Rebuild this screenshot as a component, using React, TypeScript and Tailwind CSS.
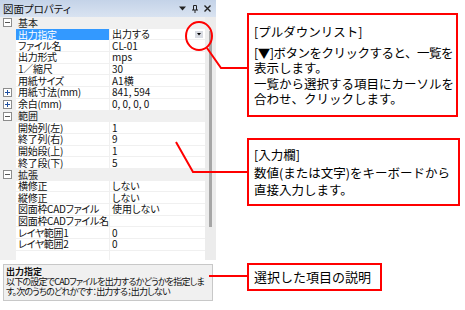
import React from 'react'

type Row =
  | { kind: 'cat'; label: string }
  | { kind: 'prop'; label: string; value?: string; expand?: boolean; selected?: boolean }
  | { kind: 'empty' }

const rows: Row[] = [
  { kind: 'cat', label: '基本' },
  { kind: 'prop', label: '出力指定', value: '出力する', selected: true },
  { kind: 'prop', label: 'ファイル名', value: 'CL-01' },
  { kind: 'prop', label: '出力形式', value: 'mps' },
  { kind: 'prop', label: '1／縮尺', value: '30' },
  { kind: 'prop', label: '用紙サイズ', value: 'A1横' },
  { kind: 'prop', label: '用紙寸法(mm)', value: '841, 594', expand: true },
  { kind: 'prop', label: '余白(mm)', value: '0, 0, 0, 0', expand: true },
  { kind: 'cat', label: '範囲' },
  { kind: 'prop', label: '開始列(左)', value: '1' },
  { kind: 'prop', label: '終了列(右)', value: '9' },
  { kind: 'prop', label: '開始段(上)', value: '1' },
  { kind: 'prop', label: '終了段(下)', value: '5' },
  { kind: 'cat', label: '拡張' },
  { kind: 'prop', label: '横修正', value: 'しない' },
  { kind: 'prop', label: '縦修正', value: 'しない' },
  { kind: 'prop', label: '図面枠CADファイル', value: '使用しない' },
  { kind: 'prop', label: '図面枠CADファイル名', value: '' },
  { kind: 'prop', label: 'レイヤ範囲1', value: '0' },
  { kind: 'prop', label: 'レイヤ範囲2', value: '0' },
  { kind: 'empty' },
]

const font = { fontFamily: '"Noto Sans CJK JP", "Noto Sans", sans-serif' }

// small boxed +/- used by the grid
function Toggle({ open }: { open: boolean }) {
  return (
    <svg width="9" height="9" viewBox="0 0 9 9" className="shrink-0">
      <rect x="0.5" y="0.5" width="8" height="8" fill="#fff" stroke="#8c8c8c" />
      <line x1="2" y1="4.5" x2="7" y2="4.5" stroke={open ? '#555' : '#2050a0'} />
      {!open && <line x1="4.5" y1="2" x2="4.5" y2="7" stroke="#2050a0" />}
    </svg>
  )
}

function GridRow({ row }: { row: Row }) {
  if (row.kind === 'cat') {
    return (
      <div className="flex h-[11.7px] items-center gap-[6px] whitespace-nowrap bg-[#f0f0f0] pl-[3px] text-[10px] leading-[10px] text-[#222]">
        <Toggle open />
        <span>{row.label}</span>
      </div>
    )
  }
  if (row.kind === 'empty') {
    return (
      <div className="flex h-[11.7px]">
        <div className="w-[16px] bg-[#f0f0f0]" />
        <div className="w-[94px] border-r border-[#f0f0f0] bg-white" />
        <div className="flex-1 bg-white" />
      </div>
    )
  }
  return (
    <div className="flex h-[11.7px] whitespace-nowrap text-[10px] leading-[10px]">
      <div className="flex w-[16px] items-center bg-[#f0f0f0] pl-[3px]">
        {row.expand && <Toggle open={false} />}
      </div>
      <div
        className={
          row.selected
            ? 'flex w-[94px] items-center border-r border-[#f0f0f0] bg-[#3399ff] pl-[2px] tracking-[-0.3px] text-white'
            : 'flex w-[94px] items-center border-r border-b border-[#f0f0f0] bg-white pl-[2px] tracking-[-0.3px] text-[#111]'
        }
      >
        {row.label}
      </div>
      <div className="flex flex-1 items-center justify-between border-b border-[#f0f0f0] bg-white pl-[2px] pr-[2px] text-[#111]">
        <span>{row.value}</span>
        {row.selected && (
          <div className="flex h-[7px] w-[8px] items-center justify-center bg-[#d9dce3]">
            <svg width="4" height="3" viewBox="0 0 4 3">
              <path d="M0 0 L4 0 L2 2.5 Z" fill="#000" />
            </svg>
          </div>
        )}
      </div>
    </div>
  )
}

function PropertyPanel() {
  return (
    <div className="flex h-[310px] w-[216px] flex-col bg-white [font-feature-settings:'palt']" style={font}>
      {/* title bar */}
      <div className="flex h-[17px] items-center justify-between bg-gradient-to-b from-[#c4d3e8] to-[#d9e3f1] pl-[3px] pr-[5px] text-[10.5px] text-[#111]">
        <span>図面プロパティ</span>
        <div className="flex items-center gap-[6px]">
          <svg width="7" height="5" viewBox="0 0 7 5">
            <path d="M0 0.5 L7 0.5 L3.5 4.5 Z" fill="#222" />
          </svg>
          <svg width="6" height="8" viewBox="0 0 6 8">
            <path d="M1.5 0.5 V5 M4.5 0.5 V5 M1.5 0.5 H4.5 M0 5 H6 M3 5 V8" stroke="#222" strokeWidth="1" fill="none" />
          </svg>
          <svg width="7" height="7" viewBox="0 0 7 7">
            <path d="M0.5 0.5 L6.5 6.5 M6.5 0.5 L0.5 6.5" stroke="#222" strokeWidth="1.4" />
          </svg>
        </div>
      </div>

      {/* grid + scrollbar */}
      <div className="flex h-[243px] overflow-hidden">
        <div className="w-[205px]">
          {rows.map((r, i) => (
            <GridRow key={i} row={r} />
          ))}
        </div>
        <div className="flex flex-1 justify-center bg-[#ececec] pt-[14px]">
          <div className="h-[196px] w-[3px] bg-[#a6a6a6]" />
        </div>
      </div>

      {/* description */}
      <div className="mx-[3px] mt-[4px] h-[37px] whitespace-nowrap border border-[#c8c8c8] bg-[#f0f0f0] px-[2px] pt-[2px] text-[9px] leading-[10px] text-[#111]">
        <div className="font-bold">出力指定</div>
        <div className="tracking-[-0.8px]">以下の設定でCADファイルを出力するかどうかを指定しま</div>
        <div className="tracking-[-0.8px]">す。次のうちのどれかです：出力する；出力しない</div>
      </div>
    </div>
  )
}

export default function App() {
  return (
    <div className="relative flex h-[310px] w-[465px] overflow-hidden bg-white">
      <PropertyPanel />

      <div className="ml-[31px] flex w-[213px] flex-col whitespace-nowrap text-[12.5px] text-black" style={font}>
        <div className="mt-[13px] h-[104px] w-[211px] border-2 border-[#f00] pl-[5px] pt-[9px] leading-[15.2px]">
          <div>[プルダウンリスト]</div>
          <div className="mt-[6px] tracking-[-0.5px]">[▼]ボタンをクリックすると、一覧を</div>
          <div>表示します。</div>
          <div>一覧から選択する項目にカーソルを</div>
          <div>合わせ、クリックします。</div>
        </div>

        <div className="mt-[21px] h-[68px] w-[213px] border-2 border-[#f00] pl-[5px] pt-[6px] leading-[17.5px]">
          <div>[入力欄]</div>
          <div>数値(または文字)をキーボードから</div>
          <div>直接入力します。</div>
        </div>

        <div className="mt-[57px] flex h-[28px] w-[135px] items-center border-2 border-[#f00] pl-[5px] text-[13px]">
          選択した項目の説明
        </div>
      </div>

      {/* callout lines drawn over the screenshot */}
      <svg className="pointer-events-none absolute left-0 top-0" width="465" height="310" viewBox="0 0 465 310">
        <ellipse cx="199" cy="36" rx="13" ry="14" fill="none" stroke="#f00" strokeWidth="2" />
        <polyline points="207,48 221,68 248,68" fill="none" stroke="#f00" strokeWidth="2" />
        <polyline points="176,142 193,172 248,172" fill="none" stroke="#f00" strokeWidth="2" />
        <polyline points="209,276 248,276" fill="none" stroke="#f00" strokeWidth="2" />
      </svg>
    </div>
  )
}
